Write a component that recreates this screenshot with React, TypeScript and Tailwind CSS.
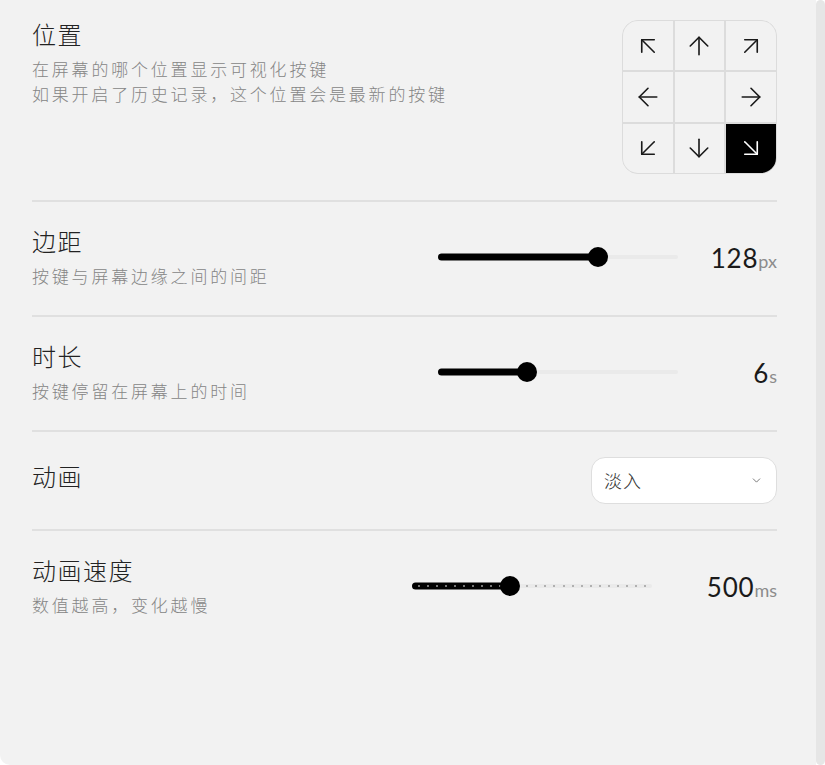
import React from 'react';
import {
  ArrowUpLeft,
  ArrowUp,
  ArrowUpRight,
  ArrowLeft,
  ArrowRight,
  ArrowDownLeft,
  ArrowDown,
  ArrowDownRight,
  ChevronDown,
} from 'lucide-react';

const cjk = "font-['Noto_Sans_CJK_SC','Noto_Sans',sans-serif]";
const num = "font-['Lato','Noto_Sans',sans-serif]";

const cells = [
  ArrowUpLeft,
  ArrowUp,
  ArrowUpRight,
  ArrowLeft,
  null,
  ArrowRight,
  ArrowDownLeft,
  ArrowDown,
  ArrowDownRight,
];

const Slider = ({ value, ticks, width }: { value: number; ticks?: boolean; width: number }) => {
  const pos = value * width;
  return (
    <div className="relative h-5" style={{ width }}>
      {/* track */}
      <div className="absolute left-0 right-0 top-1/2 -translate-y-1/2 h-[4px] rounded-full bg-[#eaeaea]" />
      <div
        className="absolute left-0 top-1/2 -translate-y-1/2 h-[7px] rounded-full bg-black"
        style={{ width: pos }}
      />
      {ticks && (
        <div className="absolute left-[6px] right-[6px] top-1/2 -translate-y-1/2 flex justify-between">
          {Array.from({ length: 26 }).map((_, i) => (
            <span key={i} className="w-[2px] h-[2px] rounded-full bg-[#9c9c9c]" />
          ))}
        </div>
      )}
      <div
        className="absolute top-1/2 -translate-y-1/2 -translate-x-1/2 w-[20px] h-[20px] rounded-full bg-black"
        style={{ left: pos }}
      />
    </div>
  );
};

const Label = ({ title, desc, className = '' }: { title: string; desc?: string[]; className?: string }) => (
  <div className={`${cjk} ${className}`}>
    <div className="text-[24px] leading-[32px] tracking-[1.5px] font-light text-[#222]">{title}</div>
    {desc && (
      <div className="mt-[6px] text-[17px] leading-[25px] tracking-[2.8px] font-light text-[#858585]">
        {desc.map((d) => (
          <div key={d}>{d}</div>
        ))}
      </div>
    )}
  </div>
);

const Value = ({ n, unit, w }: { n: string; unit: string; w: string }) => (
  <div className={`${w} flex justify-end items-baseline pt-[3px] ${num}`}>
    <span className="text-[26px] text-[#1a1a1a] tracking-[0.8px]">{n}</span>
    <span className="text-[18px] text-[#8c8c8c]">{unit}</span>
  </div>
);

export default function App() {
  return (
    <div className="w-[825px] h-[765px] bg-white flex">
      <div className="w-[816px] h-full bg-[#f2f2f2] rounded-bl-[10px] pl-8 pr-[39px]">
        {/* 位置 */}
        <div className="flex justify-between items-start pt-[18px] pb-[26px] border-b-2 border-[#e0e0e0]">
          <Label
            title="位置"
            desc={['在屏幕的哪个位置显示可视化按键', '如果开启了历史记录，这个位置会是最新的按键']}
          />
          <div className="mt-[2px] grid grid-cols-3 w-[155px] h-[154px] rounded-[16px] border border-[#dcdcdc] overflow-hidden bg-[#dcdcdc] gap-[2px]">
            {cells.map((Icon, i) => (
              <div
                key={i}
                className={`flex items-center justify-center ${
                  i === 8 ? 'bg-black text-white' : 'bg-[#f2f2f2] text-[#1a1a1a]'
                }`}
              >
                {Icon && <Icon className="w-[30px] h-[30px]" strokeWidth={1.3} />}
              </div>
            ))}
          </div>
        </div>

        {/* 边距 */}
        <div className="flex items-center justify-between pt-[23px] pb-[27px] border-b-2 border-[#e0e0e0]">
          <Label title="边距" desc={['按键与屏幕边缘之间的间距']} />
          <div className="flex items-center">
            <Slider value={0.668} width={240} />
            <Value n="128" unit="px" w="w-[99px]" />
          </div>
        </div>

        {/* 时长 */}
        <div className="flex items-center justify-between pt-[23px] pb-[27px] border-b-2 border-[#e0e0e0]">
          <Label title="时长" desc={['按键停留在屏幕上的时间']} />
          <div className="flex items-center">
            <Slider value={0.37} width={240} />
            <Value n="6" unit="s" w="w-[99px]" />
          </div>
        </div>

        {/* 动画 */}
        <div className="flex items-center justify-between py-[25px] border-b-2 border-[#e0e0e0]">
          <Label title="动画" className="pb-[9px]" />
          <div
            className={`w-[186px] h-[47px] rounded-[14px] bg-white border border-[#dedede] flex items-center justify-between pl-3 pr-[13px] ${cjk}`}
          >
            <span className="text-[18px] font-light tracking-[1px] text-[#333]">淡入</span>
            <ChevronDown className="w-[13px] h-[13px] text-[#666]" strokeWidth={1.6} />
          </div>
        </div>

        {/* 动画速度 */}
        <div className="flex items-center justify-between pt-[23px]">
          <Label title="动画速度" desc={['数值越高，变化越慢']} />
          <div className="flex items-center">
            <Slider value={0.41} width={240} ticks />
            <Value n="500" unit="ms" w="w-[125px]" />
          </div>
        </div>
      </div>
      <div className="w-[9px] h-full bg-[#e6e6e6] rounded-t-[6px] rounded-b-[6px]" />
    </div>
  );
}
